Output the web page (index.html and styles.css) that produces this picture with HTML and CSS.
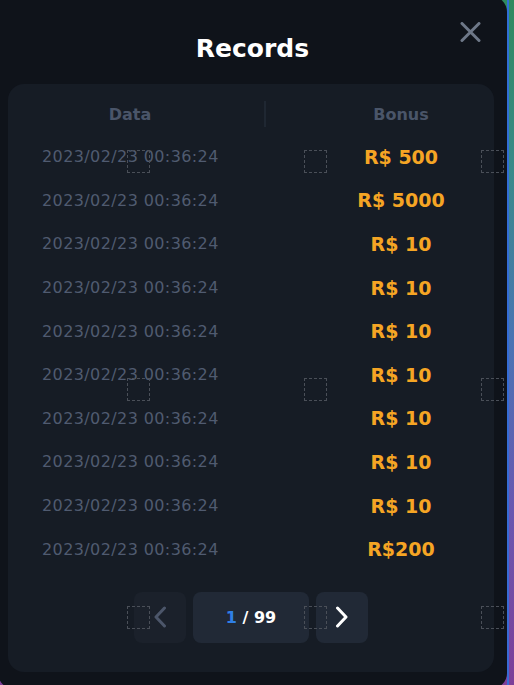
FILE: index.html
```html
<!DOCTYPE html>
<html>
<head>
<meta charset="utf-8">
<link rel="stylesheet" href="styles.css">
</head>
<body>
<div class="modal">
  <h1 class="title">Records</h1>
  <button class="close" aria-label="close">
    <svg width="21" height="20" viewBox="0 0 21 20"><path d="M2 1.5L19 18.5M19 1.5L2 18.5" stroke="#6e7888" stroke-width="3" stroke-linecap="round"/></svg>
  </button>
  <div class="card">
    <div class="head">
      <div class="hcell">Data</div>
      <div class="divider"></div>
      <div class="hcell">Bonus</div>
    </div>
    <div class="rows">
      <div class="row"><span class="date">2023/02/23 00:36:24</span><span class="bonus">R$ 500</span></div>
      <div class="row"><span class="date">2023/02/23 00:36:24</span><span class="bonus">R$ 5000</span></div>
      <div class="row"><span class="date">2023/02/23 00:36:24</span><span class="bonus">R$ 10</span></div>
      <div class="row"><span class="date">2023/02/23 00:36:24</span><span class="bonus">R$ 10</span></div>
      <div class="row"><span class="date">2023/02/23 00:36:24</span><span class="bonus">R$ 10</span></div>
      <div class="row"><span class="date">2023/02/23 00:36:24</span><span class="bonus">R$ 10</span></div>
      <div class="row"><span class="date">2023/02/23 00:36:24</span><span class="bonus">R$ 10</span></div>
      <div class="row"><span class="date">2023/02/23 00:36:24</span><span class="bonus">R$ 10</span></div>
      <div class="row"><span class="date">2023/02/23 00:36:24</span><span class="bonus">R$ 10</span></div>
      <div class="row"><span class="date">2023/02/23 00:36:24</span><span class="bonus">R$200</span></div>
    </div>
    <div class="pager">
      <button class="pbtn prev" aria-label="previous">
        <svg width="14" height="22" viewBox="0 0 14 22"><path d="M11.5 2L3 11L11.5 20" fill="none" stroke="#4c566a" stroke-width="3" stroke-linecap="round" stroke-linejoin="round"/></svg>
      </button>
      <div class="page"><span class="ptext"><span class="cur">1</span> / 99</span></div>
      <button class="pbtn next" aria-label="next">
        <svg width="14" height="22" viewBox="0 0 14 22"><path d="M2.5 2L11 11L2.5 20" fill="none" stroke="#ffffff" stroke-width="3" stroke-linecap="round" stroke-linejoin="round"/></svg>
      </button>
    </div>
  </div>
</div>
<div class="marks">
  <i class="mark m1"></i><i class="mark m2"></i><i class="mark m3"></i>
  <i class="mark m4"></i><i class="mark m5"></i><i class="mark m6"></i>
  <i class="mark m7"></i><i class="mark m8"></i><i class="mark m9"></i>
</div>
</body>
</html>
```
FILE: styles.css
```css
html, body {
  margin: 0;
  padding: 0;
  height: 685px;
  overflow: hidden;
}
body {
  position: relative;
  font-family: "DejaVu Sans", sans-serif;
  background:
    linear-gradient(#2f6fd6, #3a6ad4) 507px 0 / 2px 100% no-repeat,
    linear-gradient(to bottom, #2f8a5e 0%, #3a8a8a 25%, #4a74b4 50%, #6a56b0 75%, #7d3f98 100%);
}
.modal {
  position: relative;
  margin: -4px 0 0 -2px;
  width: 509px;
  height: 693px;
  background: #0f131a;
  border-radius: 0 16px 16px 16px;
  box-sizing: border-box;
  padding: 38px 0 0 10px;
}
.title {
  margin: 0;
  height: 30px;
  line-height: 30px;
  text-align: center;
  padding-right: 10px;
  color: #ffffff;
  font-size: 25px;
  font-weight: 700;
}
.close {
  position: absolute;
  left: 462px;
  top: 26px;
  padding: 0;
  border: 0;
  background: none;
  width: 21px;
  height: 20px;
  display: block;
}
.close svg { display: block; }
.card {
  margin-top: 20px;
  width: 486px;
  background: #161c25;
  border-radius: 16px;
  padding: 14px 0 29px;
  box-sizing: border-box;
}
.head {
  display: grid;
  grid-template-columns: 244px 56px 1fr;
  height: 32px;
  align-items: center;
}
.hcell {
  text-align: center;
  color: #4a5569;
  font-size: 16px;
  font-weight: 700;
}
.divider {
  width: 2px;
  height: 26px;
  margin-left: 12px;
  background: #1f2732;
}
.rows {
  margin-top: 5px;
}
.row {
  display: grid;
  grid-template-columns: 300px 1fr;
  align-items: center;
  height: 43.6px;
}
.date {
  padding-left: 34px;
  color: #505b70;
  font-size: 16px;
  letter-spacing: 0.4px;
  white-space: nowrap;
}
.bonus {
  text-align: center;
  color: #f5a524;
  font-size: 19px;
  font-weight: 700;
  white-space: nowrap;
}
.pager {
  margin-top: 21px;
  display: flex;
  justify-content: center;
  gap: 7px;
}
.pbtn, .page {
  height: 51px;
  border: 0;
  border-radius: 8px;
  display: flex;
  align-items: center;
  justify-content: center;
  padding: 0;
}
.pbtn { width: 52px; }
.prev { background: #1b212b; }
.next { background: #212936; }
.page {
  width: 116px;
  background: #212936;
  color: #ffffff;
  font-size: 16px;
  font-weight: 700;
}
.cur { color: #2f7fe6; }
.marks {
  position: absolute;
  inset: 0;
  pointer-events: none;
}
.mark {
  position: absolute;
  width: 23px;
  height: 23px;
  box-sizing: border-box;
  border: 1px dashed #4a4f58;
}
.m1 { left: 127px; top: 150px; }
.m2 { left: 304px; top: 150px; }
.m3 { left: 481px; top: 150px; }
.m4 { left: 127px; top: 378px; }
.m5 { left: 304px; top: 378px; }
.m6 { left: 481px; top: 378px; }
.m7 { left: 127px; top: 606px; }
.m8 { left: 304px; top: 606px; }
.m9 { left: 481px; top: 606px; }
```
